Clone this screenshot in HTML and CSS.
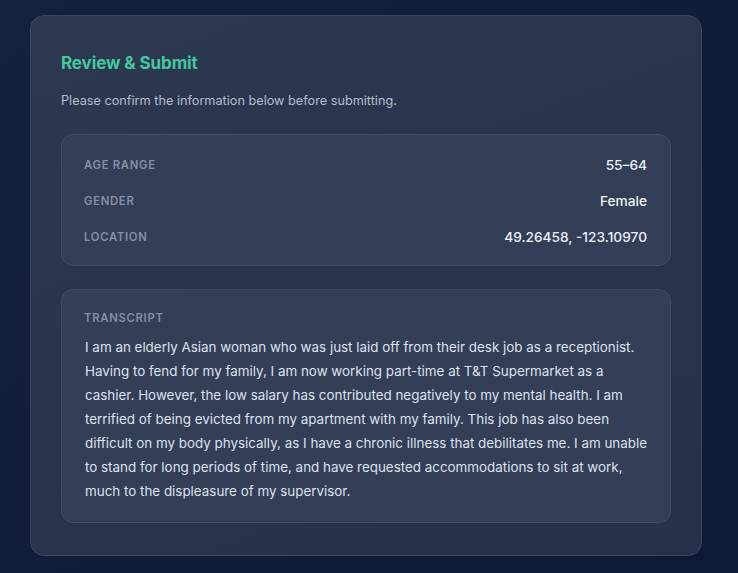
FILE: index.html
```html
<!DOCTYPE html>
<html lang="en">
<head>
<meta charset="utf-8">
<title>Review &amp; Submit</title>
<link rel="stylesheet" href="styles.css">
</head>
<body>
<main class="card">
  <h1 class="title">Review &amp; Submit</h1>
  <p class="subtitle">Please confirm the information below before submitting.</p>
  <section class="panel details">
    <div class="row"><span class="label">Age Range</span><span class="value">55–64</span></div>
    <div class="row"><span class="label">Gender</span><span class="value">Female</span></div>
    <div class="row"><span class="label">Location</span><span class="value">49.26458, -123.10970</span></div>
  </section>
  <section class="panel transcript">
    <div class="label">Transcript</div>
    <p class="text">I am an elderly Asian woman who was just laid off from their desk job as a receptionist. Having to fend for my family, I am now working part-time at T&amp;T Supermarket as a cashier. However, the low salary has contributed negatively to my mental health. I am terrified of being evicted from my apartment with my family. This job has also been difficult on my body physically, as I have a chronic illness that debilitates me. I am unable to stand for long periods of time, and have requested accommodations to sit at work, much to the displeasure of my supervisor.</p>
  </section>
</main>
</body>
</html>
```
FILE: styles.css
```css
* { box-sizing: border-box; }
html, body { height: 100%; }
body {
  margin: 0;
  padding: 15px 36px 17px 30px;
  background: linear-gradient(135deg, #13223f 0%, #0f1c3a 60%, #0d1a37 100%);
  font-family: Inter, "Noto Sans", "Liberation Sans", sans-serif;
  color: #e6ebf3;
}
.card {
  width: 672px;
  height: 541px;
  padding: 35px 30px 34px 30px;
  border-radius: 14px;
  border: 1px solid #3a4762;
  background: linear-gradient(160deg, #2d3852 0%, #28344e 50%, #26314b 100%);
  display: flex;
  flex-direction: column;
}
.title {
  margin: 0;
  font-size: 17px;
  line-height: 24px;
  font-weight: 700;
  color: #43c99a;
  letter-spacing: -0.1px;
}
.subtitle {
  margin: 16px 0 0 0;
  font-size: 12.7px;
  line-height: 20px;
  color: #b4bdcd;
}
.panel {
  border: 1px solid #414d68;
  border-radius: 12px;
  background: #333e57;
  padding: 19px 23px 19px 23px;
}
.details {
  margin-top: 23px;
  padding-top: 20px;
  padding-bottom: 18px;
  display: flex;
  flex-direction: column;
  gap: 16px;
}
.row {
  display: flex;
  justify-content: space-between;
  align-items: center;
  height: 20px;
}
.label {
  font-size: 11.3px;
  font-weight: 600;
  letter-spacing: 0.7px;
  text-transform: uppercase;
  color: #8390a7;
}
.details .row .label { margin-left: -1px; }
.value {
  font-size: 13.7px;
  font-weight: 500;
  color: #eef1f6;
}
.transcript {
  margin-top: 23px;
  padding: 20px 16px 19px 23px;
}
.transcript .label {
  line-height: 16px;
  margin-left: -1px;
}
.text {
  margin: 9px 0 0 0;
  font-size: 13.4px;
  line-height: 24px;
  color: #dde3ec;
}
```
